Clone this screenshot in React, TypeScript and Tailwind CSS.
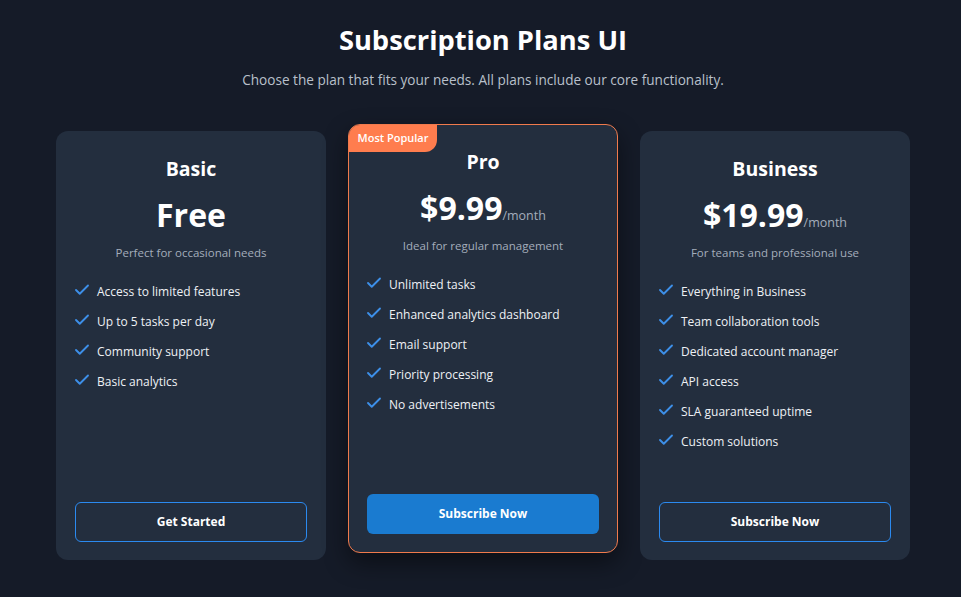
import React from 'react';
import { Check } from 'lucide-react';

type Plan = {
  name: string;
  price: string;
  period?: string;
  description: string;
  features: string[];
  cta: string;
  popular?: boolean;
};

const plans: Plan[] = [
  {
    name: 'Basic',
    price: 'Free',
    description: 'Perfect for occasional needs',
    features: ['Access to limited features', 'Up to 5 tasks per day', 'Community support', 'Basic analytics'],
    cta: 'Get Started',
  },
  {
    name: 'Pro',
    price: '$9.99',
    period: '/month',
    description: 'Ideal for regular management',
    features: ['Unlimited tasks', 'Enhanced analytics dashboard', 'Email support', 'Priority processing', 'No advertisements'],
    cta: 'Subscribe Now',
    popular: true,
  },
  {
    name: 'Business',
    price: '$19.99',
    period: '/month',
    description: 'For teams and professional use',
    features: [
      'Everything in Business',
      'Team collaboration tools',
      'Dedicated account manager',
      'API access',
      'SLA guaranteed uptime',
      'Custom solutions',
    ],
    cta: 'Subscribe Now',
  },
];

function PlanCard({ plan }: { plan: Plan }) {
  return (
    <div
      className={
        plan.popular
          ? 'relative flex flex-col rounded-xl bg-[#232e3e] border border-[#f07a4c] px-[18px] pt-[23px] pb-[18px] -translate-y-[7px] shadow-[0_10px_25px_rgba(0,0,0,0.45)] overflow-hidden'
          : 'relative flex flex-col rounded-xl bg-[#232e3e] px-[19px] pt-6 pb-[18px]'
      }
    >
      {/* Badge */}
      {plan.popular && (
        <span className="absolute left-0 top-0 h-[27px] w-[88px] flex items-center justify-center bg-[#ff7d4e] text-white text-[11px] font-semibold rounded-br-xl">
          Most Popular
        </span>
      )}

      <h2 className="text-center text-[19.5px] leading-7 font-bold text-white mb-3">{plan.name}</h2>

      <div className="flex items-baseline justify-center h-10 mb-[8px]">
        <span className="text-[32px] leading-10 font-bold text-white">{plan.price}</span>
        {plan.period && <span className="text-[12.5px] text-[#a3adbb]">{plan.period}</span>}
      </div>

      <p className="text-center text-[11.5px] leading-5 text-[#a3adbb] mb-[19px]">{plan.description}</p>

      <ul className="flex flex-col gap-[10px] flex-1 mb-[50px]">
        {plan.features.map((f) => (
          <li key={f} className="flex items-center gap-[6px] text-[12px] leading-5 text-[#eef1f5]">
            <Check className="w-[18px] h-[18px] -ml-[2px] -mt-[4px] text-[#3d8fe8] shrink-0" strokeWidth={2.5} />
            {f}
          </li>
        ))}
      </ul>

      <button
        className={
          plan.popular
            ? 'h-10 rounded-md bg-[#1a7bd0] text-white text-[12px] font-bold'
            : 'h-10 rounded-md border border-[#2b8af0] text-white text-[12px] font-bold'
        }
      >
        {plan.cta}
      </button>
    </div>
  );
}

export default function App() {
  return (
    <main
      className="min-h-screen bg-[#151b28] pt-[22px] pb-10"
      style={{ fontFamily: '"Open Sans", "Noto Sans", sans-serif' }}
    >
      <div className="w-[854px] ml-[56px]">
        {/* Header */}
        <div className="text-center mb-[41px]">
          <h1 className="text-[27.3px] leading-9 font-bold text-white mb-[12px]">Subscription Plans UI</h1>
          <p className="text-[13.6px] leading-5 text-[#b9c0cb]">
            Choose the plan that fits your needs. All plans include our core functionality.
          </p>
        </div>

        {/* Plans */}
        <div className="grid grid-cols-3 gap-[22px]">
          {plans.map((p) => (
            <PlanCard key={p.name} plan={p} />
          ))}
        </div>
      </div>
    </main>
  );
}
